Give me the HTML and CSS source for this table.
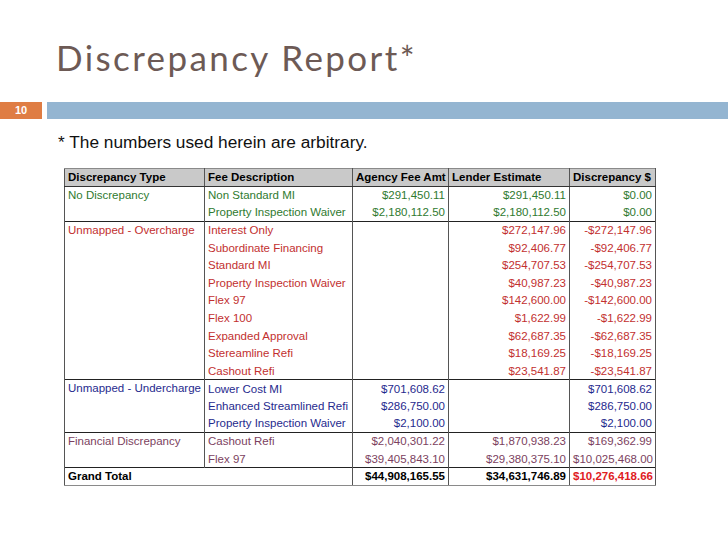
FILE: index.html
```html
<!DOCTYPE html>
<html>
<head>
<meta charset="utf-8">
<link rel="stylesheet" href="styles.css">
</head>
<body>
<div class="slide">
  <h1 class="title">Discrepancy Report*</h1>
  <div class="numbar">
    <div class="num">10</div>
    <div class="bar"></div>
  </div>
  <p class="note">* The numbers used herein are arbitrary.</p>
  <table class="report">
    <thead>
      <tr>
        <th class="c1">Discrepancy Type</th>
        <th class="c2">Fee Description</th>
        <th class="c3">Agency Fee Amt</th>
        <th class="c4">Lender Estimate</th>
        <th class="c5">Discrepancy $</th>
      </tr>
    </thead>
    <tbody class="g-green">
      <tr class="first">
        <td class="c1" rowspan="2">No Discrepancy</td>
        <td>Non Standard MI</td><td class="n">$291,450.11</td><td class="n">$291,450.11</td><td class="n">$0.00</td>
      </tr>
      <tr><td>Property Inspection Waiver</td><td class="n">$2,180,112.50</td><td class="n">$2,180,112.50</td><td class="n">$0.00</td></tr>
    </tbody>
    <tbody class="g-red">
      <tr class="first">
        <td class="c1" rowspan="9">Unmapped - Overcharge</td>
        <td>Interest Only</td><td class="n"></td><td class="n">$272,147.96</td><td class="n">-$272,147.96</td>
      </tr>
      <tr><td>Subordinate Financing</td><td class="n"></td><td class="n">$92,406.77</td><td class="n">-$92,406.77</td></tr>
      <tr><td>Standard MI</td><td class="n"></td><td class="n">$254,707.53</td><td class="n">-$254,707.53</td></tr>
      <tr><td>Property Inspection Waiver</td><td class="n"></td><td class="n">$40,987.23</td><td class="n">-$40,987.23</td></tr>
      <tr><td>Flex 97</td><td class="n"></td><td class="n">$142,600.00</td><td class="n">-$142,600.00</td></tr>
      <tr><td>Flex 100</td><td class="n"></td><td class="n">$1,622.99</td><td class="n">-$1,622.99</td></tr>
      <tr><td>Expanded Approval</td><td class="n"></td><td class="n">$62,687.35</td><td class="n">-$62,687.35</td></tr>
      <tr><td>Stereamline Refi</td><td class="n"></td><td class="n">$18,169.25</td><td class="n">-$18,169.25</td></tr>
      <tr><td>Cashout Refi</td><td class="n"></td><td class="n">$23,541.87</td><td class="n">-$23,541.87</td></tr>
    </tbody>
    <tbody class="g-blue">
      <tr class="first">
        <td class="c1" rowspan="3">Unmapped - Undercharge</td>
        <td>Lower Cost MI</td><td class="n">$701,608.62</td><td class="n"></td><td class="n">$701,608.62</td>
      </tr>
      <tr><td>Enhanced Streamlined Refi</td><td class="n">$286,750.00</td><td class="n"></td><td class="n">$286,750.00</td></tr>
      <tr><td>Property Inspection Waiver</td><td class="n">$2,100.00</td><td class="n"></td><td class="n">$2,100.00</td></tr>
    </tbody>
    <tbody class="g-purple">
      <tr class="first">
        <td class="c1" rowspan="2">Financial Discrepancy</td>
        <td>Cashout Refi</td><td class="n">$2,040,301.22</td><td class="n">$1,870,938.23</td><td class="n">$169,362.99</td>
      </tr>
      <tr><td>Flex 97</td><td class="n">$39,405,843.10</td><td class="n">$29,380,375.10</td><td class="n">$10,025,468.00</td></tr>
    </tbody>
    <tfoot>
      <tr class="first">
        <td class="c1" colspan="2">Grand Total</td>
        <td class="n">$44,908,165.55</td><td class="n">$34,631,746.89</td><td class="n total-red">$10,276,418.66</td>
      </tr>
    </tfoot>
  </table>
</div>
</body>
</html>
```

FILE: styles.css
```css
html, body {
  margin: 0;
  padding: 0;
  background: #ffffff;
}

.slide {
  width: 728px;
  height: 546px;
  overflow: hidden;
}

.title {
  margin: 0;
  padding: 40px 0 0 56px;
  height: 75px;
  box-sizing: border-box;
  font-family: "Lato", "Open Sans", sans-serif;
  font-weight: 400;
  font-size: 35px;
  line-height: 35px;
  letter-spacing: 2.4px;
  color: #6d5a55;
}

.numbar {
  display: flex;
  gap: 5px;
  margin-top: 27px;
  height: 17px;
}

.num {
  width: 42px;
  background: #df7d44;
  color: #ffffff;
  font-family: "Liberation Sans", Arial, sans-serif;
  font-weight: 700;
  font-size: 11px;
  line-height: 17px;
  text-align: center;
}

.bar {
  flex: 1;
  background: #94b5d1;
}

.note {
  margin: 13px 0 0 58px;
  font-family: "Liberation Sans", Arial, sans-serif;
  font-size: 17.3px;
  line-height: 20px;
  color: #111111;
}

.report {
  margin: 16px 0 0 64px;
  border-collapse: collapse;
  table-layout: fixed;
  width: 591px;
  font-family: "Liberation Sans", Arial, sans-serif;
  font-size: 11.5px;
  border: 1px solid #8a8a8a;
}

.report th,
.report td {
  height: 17.6px;
  padding: 0 3px;
  line-height: 16px;
  white-space: nowrap;
  overflow: hidden;
  box-sizing: border-box;
  border-left: 1px solid #555555;
  border-right: 1px solid #555555;
}

.report th {
  background: #c9c9c9;
  color: #000000;
  font-weight: 700;
  text-align: left;
  border-bottom: 1px solid #333333;
  border-top: 1px solid #8a8a8a;
}

.report th.c1 { width: 140px; }
.report th.c2 { width: 148px; }
.report th.c3 { width: 96px; }
.report th.c4 { width: 121px; }
.report th.c5 { width: 86px; }

.report td.c1 {
  vertical-align: top;
}

.report .n {
  text-align: right;
}

.report tr.first td {
  border-top: 1px solid #222222;
}

.g-green td { color: #2f7a2f; }
.g-red td { color: #c2302f; }
.g-blue td { color: #1f2a8e; }
.g-purple td { color: #7c3f60; }

.report tfoot td {
  color: #000000;
  font-weight: 700;
  border-bottom: 1px solid #8a8a8a;
}

.report tfoot td.total-red {
  color: #e0201f;
}
```
